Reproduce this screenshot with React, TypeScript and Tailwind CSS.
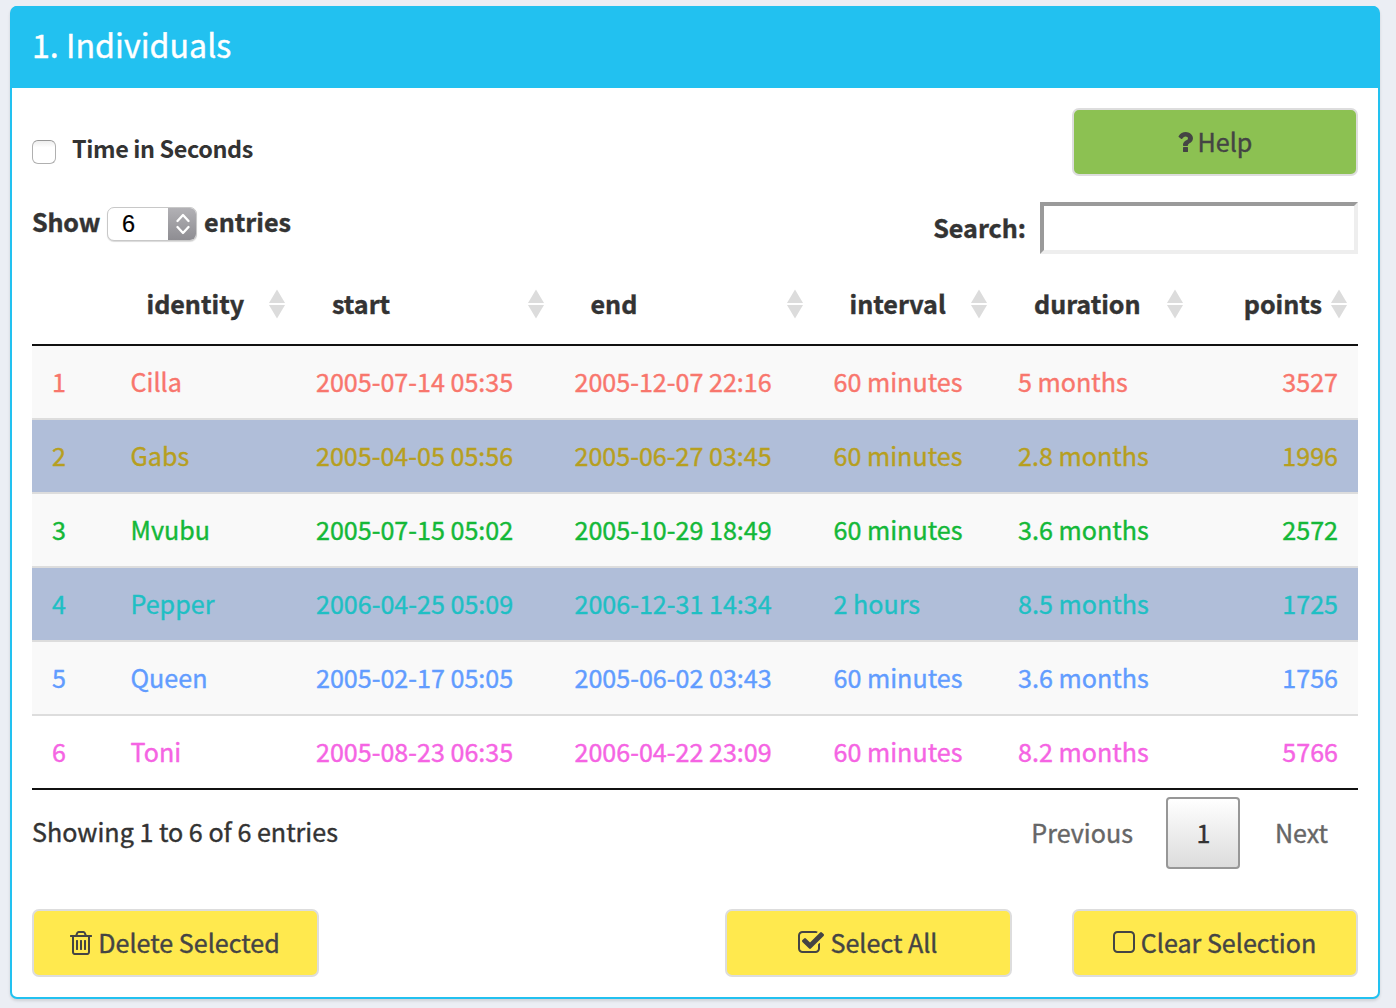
import React, { useState } from 'react';

const TRASH =
  'M704 736v576q0 14-9 23t-23 9h-64q-14 0-23-9t-9-23v-576q0-14 9-23t23-9h64q14 0 23 9t9 23zm256 0v576q0 14-9 23t-23 9h-64q-14 0-23-9t-9-23v-576q0-14 9-23t23-9h64q14 0 23 9t9 23zm256 0v576q0 14-9 23t-23 9h-64q-14 0-23-9t-9-23v-576q0-14 9-23t23-9h64q14 0 23 9t9 23zm128 724v-948h-896v948q0 22 7 40.500t14.500 27 10.500 8.500h832q3 0 10.500-8.500t14.500-27 7-40.500zm-672-1076h448l-48-117q-7-9-17-11h-317q-10 2-17 11zm928 32v64q0 14-9 23t-23 9h-96v948q0 83-47 143.500t-113 60.500h-832q-66 0-113-58.500t-47-141.500v-952h-96q-14 0-23-9t-9-23v-64q0-14 9-23t23-9h309l70-167q15-37 54-63t79-26h320q40 0 79 26t54 63l70 167h309q14 0 23 9t9 23z';
const CHECK =
  'M1472 930v318q0 119-84.500 203.500t-203.500 84.500h-832q-119 0-203.500-84.500t-84.500-203.500v-832q0-119 84.500-203.500t203.500-84.500h832q63 0 117 25 15 7 18 23 3 17-9 29l-49 49q-10 10-23 10-3 0-9-2-23-6-45-6h-832q-66 0-113 47t-47 113v832q0 66 47 113t113 47h832q66 0 113-47t47-113v-254q0-13 9-22l64-64q10-10 23-10 6 0 12 3 20 8 20 29zm231-489l-814 814q-24 24-57 24t-57-24l-430-430q-24-24-24-57t24-57l110-110q24-24 57-24t57 24l263 263 647-647q24-24 57-24t57 24l110 110q24 24 24 57t-24 57z';
const SQUARE =
  'M1312 256h-832q-66 0-113 47t-47 113v832q0 66 47 113t113 47h832q66 0 113-47t47-113v-832q0-66-47-113t-113-47zm288 160v832q0 119-84.500 203.500t-203.500 84.500h-832q-119 0-203.500-84.500t-84.500-203.500v-832q0-119 84.500-203.500t203.500-84.500h832q119 0 203.500 84.500t84.500 203.500z';
const QUESTION =
  'M1088 1256v240q0 16-12 28t-28 12h-240q-16 0-28-12t-12-28v-240q0-16 12-28t28-12h240q16 0 28 12t12 28zm316-600q0 54-15.500 101t-35 76.500-55 59.500-57.500 43.500-61 35.500q-41 23-68.500 65t-27.500 67q0 17-12 32.500t-28 15.500h-240q-15 0-25.500-18.500t-10.500-37.500v-45q0-83 65-156.500t143-108.500q59-27 84-56t25-76q0-42-46.500-74t-107.500-32q-65 0-108 29-35 25-107 115-13 16-31 16-12 0-25-8l-164-125q-13-10-15.500-25t5.500-28q160-266 464-266 80 0 161 31t146 83 106 127.500 41 158.500z';

const COLS = 'grid grid-cols-[79px_185px_259px_259px_184px_196px_164px] items-center';

const HEADERS = ['identity', 'start', 'end', 'interval', 'duration', 'points'];

const HEADER_PAD = ['pl-[35.5px]', 'pl-9', 'pl-[35.5px]', 'pl-[35.5px]', 'pl-9', ''];
const CELL_PAD = ['pl-[19.5px]', 'pl-5', 'pl-[19.5px]', 'pl-[19.5px]', 'pl-5', 'pr-5 text-right'];

const ROWS = [
  { color: 'text-[#F8766D]', cells: ['Cilla', '2005-07-14 05:35', '2005-12-07 22:16', '60 minutes', '5 months', '3527'] },
  { color: 'text-[#B79F1F]', cells: ['Gabs', '2005-04-05 05:56', '2005-06-27 03:45', '60 minutes', '2.8 months', '1996'] },
  { color: 'text-[#14B838]', cells: ['Mvubu', '2005-07-15 05:02', '2005-10-29 18:49', '60 minutes', '3.6 months', '2572'] },
  { color: 'text-[#1FBFC4]', cells: ['Pepper', '2006-04-25 05:09', '2006-12-31 14:34', '2 hours', '8.5 months', '1725'] },
  { color: 'text-[#619CFF]', cells: ['Queen', '2005-02-17 05:05', '2005-06-02 03:43', '60 minutes', '3.6 months', '1756'] },
  { color: 'text-[#F564E3]', cells: ['Toni', '2005-08-23 06:35', '2006-04-22 23:09', '60 minutes', '8.2 months', '5766'] },
];

function Icon({ d, x, units }: { d: string; x: number; units: number }) {
  return (
    <svg width={units / 64} height={28} viewBox={`${x} 0 ${units} 1792`} fill="currentColor" className="shrink-0">
      <path d={d} />
    </svg>
  );
}

function SortIcon() {
  return (
    <svg width="18" height="30" viewBox="0 0 18 30" fill="#dcdcdc" className="shrink-0">
      <path d="M9 0.500L17 14H1z" />
      <path d="M9 29.500L17 16H1z" />
    </svg>
  );
}

function Button({ className, children }: { className: string; children: React.ReactNode }) {
  return (
    <button
      className={`flex h-[68px] items-center justify-center whitespace-nowrap rounded-[7px] border-2 border-[#dddddd] text-[25.1px] leading-7 text-[#444444] ${className}`}
    >
      {children}
    </button>
  );
}

export default function App() {
  const [selected, setSelected] = useState([1, 3]);
  const toggle = (i: number) =>
    setSelected((s) => (s.includes(i) ? s.filter((n) => n !== i) : [...s, i]));

  return (
    <div className="h-[1008px] w-[1396px] overflow-hidden bg-[#ebeef4] pl-[10px] pt-[6px] font-['Noto_Sans_CJK_SC',sans-serif] text-[25.1px] leading-9 text-[#333333] [-webkit-text-stroke:0.4px]">
      <section className="flex h-[993px] w-[1370px] flex-col rounded-[7px] border-2 border-[#22c1f0] bg-white shadow-[0_2px_3px_rgba(0,0,0,0.12)]">
        <header className="-mt-0.5 flex h-[82px] shrink-0 items-center rounded-t-[5px] bg-[#22c1f0] pb-[7px] pl-5 text-[32.2px] text-white">
          <h1>1. Individuals</h1>
        </header>

        <div className="flex flex-col px-5 pt-5">
          <div className="flex h-[68px] justify-between">
            <label className="flex items-start pt-[22px]">
              <span className="mt-[10px] size-6 rounded-[6px] border border-[#b0b0b0] border-t-[#979797] bg-white bg-linear-to-b from-[#eeeeee] to-white to-30%" />
              <span className="ml-4 text-[23.4px] font-bold tracking-[-0.38px] [-webkit-text-stroke:0px]">Time in Seconds</span>
            </label>
            <Button className="w-[286px] gap-[5px] bg-[#8cc152] pr-px">
              <Icon d={QUESTION} x={384} units={1024} />
              <span className="-mt-0.5">Help</span>
            </Button>
          </div>

          <div className="flex h-[88px] justify-between pt-[26px] font-bold">
            <div className="flex h-[42px] items-center">
              <span className="-mt-1 tracking-[-0.2px]">Show</span>
              <span className="ml-[7px] mt-0.5 flex h-[34px] w-[90px] items-center overflow-hidden rounded-[7px] border border-[#c8c8c8] bg-white font-['Liberation_Sans',sans-serif] text-[23.5px] font-normal text-black shadow-[0_1px_1px_rgba(0,0,0,0.15)] [-webkit-text-stroke:0.2px]">
                <span className="grow pl-[14px]">6</span>
                <span className="-mr-px flex h-[34px] w-[29px] items-center justify-center bg-linear-to-b from-[#b3b2b6] to-[#8d8c91]">
                  <svg width="14" height="22" viewBox="0 0 14 22" fill="none" stroke="white" strokeWidth="2.300" strokeLinecap="round" strokeLinejoin="round">
                    <path d="M1.500 8L7 2L12.500 8M1.500 14L7 20L12.500 14" />
                  </svg>
                </span>
              </span>
              <span className="-mt-1 ml-[7px]">entries</span>
            </div>
            <div className="flex h-[52px] items-center">
              <span className="-mt-0.5">Search:</span>
              <input className="ml-3.5 h-[52px] w-[318px] border-4 border-b-[#eeeeee] border-l-[#9a9a9a] border-r-[#eeeeee] border-t-[#9a9a9a] bg-white outline-none" />
            </div>
          </div>

          <div className={`${COLS} h-[82px] border-b-2 border-[#111111] font-bold`}>
            <span />
            {HEADERS.map((h, j) => (
              <div
                key={h}
                className={`flex items-center pr-[10px] ${h === 'points' ? 'justify-end gap-2' : 'justify-between'} ${HEADER_PAD[j]}`}
              >
                <span className="-mt-0.5">{h}</span>
                <SortIcon />
              </div>
            ))}
          </div>

          <div className="border-b-2 border-[#111111]">
            {ROWS.map((r, i) => (
              <div
                key={i}
                onClick={() => toggle(i)}
                className={`${COLS} whitespace-nowrap pb-0.5 ${i === 0 ? 'h-[72px]' : 'h-[74px] border-t-2 border-[#dddddd]'} ${
                  selected.includes(i) ? 'bg-[#b0bed9]' : i % 2 === 0 ? 'bg-[#f9f9f9]' : 'bg-white'
                } ${r.color}`}
              >
                <span className="pl-5">{i + 1}</span>
                {r.cells.map((c, j) => (
                  <span key={j} className={CELL_PAD[j]}>
                    {c}
                  </span>
                ))}
              </div>
            ))}
          </div>

          <div className="flex h-[119px] justify-between pt-[7px]">
            <span className="pt-4">Showing 1 to 6 of 6 entries</span>
            <div className="flex h-[72px] items-center pr-[30px] text-[#666666]">
              <span className="-mt-0.5">Previous</span>
              <span className="ml-[33.5px] mr-[34.5px] flex h-[72px] w-[74px] items-center justify-center rounded-[4px] border-2 border-[#979797] bg-linear-to-b from-white to-[#dcdcdc] pb-0.5 text-[#333333]">
                1
              </span>
              <span className="-mt-0.5">Next</span>
            </div>
          </div>

          <div className="flex">
            <Button className="w-[287px] gap-1.5 bg-[#ffe94e] pr-px">
              <Icon d={TRASH} x={192} units={1408} />
              <span className="-mt-0.5">Delete Selected</span>
            </Button>
            <Button className="ml-[406px] w-[287px] gap-[7px] bg-[#ffe94e] pr-0.5">
              <Icon d={CHECK} x={64} units={1664} />
              <span className="-mt-0.5">Select All</span>
            </Button>
            <Button className="ml-[60px] w-[286px] gap-1.5 bg-[#ffe94e] pr-px">
              <Icon d={SQUARE} x={192} units={1408} />
              <span className="-mt-0.5">Clear Selection</span>
            </Button>
          </div>
        </div>
      </section>
    </div>
  );
}
